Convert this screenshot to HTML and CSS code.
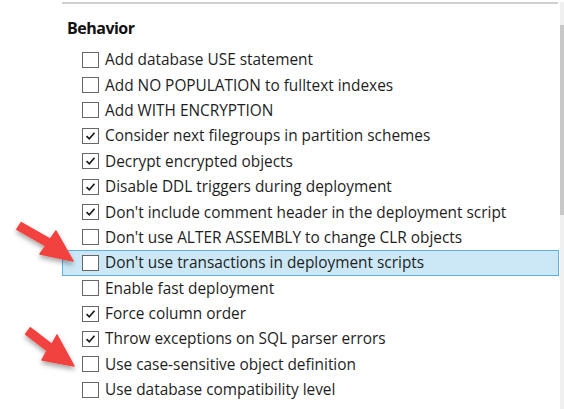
FILE: index.html
```html
<!DOCTYPE html>
<html lang="en">
<head>
  <meta charset="UTF-8" />
  <title>Behavior options</title>
  <link rel="stylesheet" href="styles.css">
</head>
<body>
  <div class="frame">
    <div class="panel">
      <h2 class="group-title">Behavior</h2>
      <ul class="options">
        <li class="option"><span class="box"></span>Add database USE statement</li>
        <li class="option"><span class="box"></span>Add NO POPULATION to fulltext indexes</li>
        <li class="option"><span class="box"></span>Add WITH ENCRYPTION</li>
        <li class="option checked"><span class="box"><svg viewBox="0 0 16 16"><path d="M3.5 8.2 L6.6 11.3 L12.6 4.2"/></svg></span>Consider next filegroups in partition schemes</li>
        <li class="option checked"><span class="box"><svg viewBox="0 0 16 16"><path d="M3.5 8.2 L6.6 11.3 L12.6 4.2"/></svg></span>Decrypt encrypted objects</li>
        <li class="option checked"><span class="box"><svg viewBox="0 0 16 16"><path d="M3.5 8.2 L6.6 11.3 L12.6 4.2"/></svg></span>Disable DDL triggers during deployment</li>
        <li class="option checked"><span class="box"><svg viewBox="0 0 16 16"><path d="M3.5 8.2 L6.6 11.3 L12.6 4.2"/></svg></span>Don't include comment header in the deployment script</li>
        <li class="option"><span class="box"></span>Don't use ALTER ASSEMBLY to change CLR objects</li>
        <li class="option selected"><span class="box"></span>Don't use transactions in deployment scripts</li>
        <li class="option"><span class="box"></span>Enable fast deployment</li>
        <li class="option checked"><span class="box"><svg viewBox="0 0 16 16"><path d="M3.5 8.2 L6.6 11.3 L12.6 4.2"/></svg></span>Force column order</li>
        <li class="option checked"><span class="box"><svg viewBox="0 0 16 16"><path d="M3.5 8.2 L6.6 11.3 L12.6 4.2"/></svg></span>Throw exceptions on SQL parser errors</li>
        <li class="option"><span class="box"></span>Use case-sensitive object definition</li>
        <li class="option"><span class="box"></span>Use database compatibility level</li>
      </ul>
    </div>
    <div class="scrollbar"><div class="thumb"></div></div>
  </div>

  <!-- callout arrows drawn over the screenshot -->
  <svg class="arrows" width="564" height="409" viewBox="0 0 564 409">
    <defs>
      <filter id="shadow" x="-30%" y="-30%" width="160%" height="160%">
        <feDropShadow dx="0" dy="3" stdDeviation="2.5" flood-color="#000" flood-opacity="0.35"/>
      </filter>
    </defs>
    <g fill="#f2423f" stroke="#f2423f" stroke-width="1.5" stroke-linejoin="round" filter="url(#shadow)">
      <path d="M21.2 222.6 L50.2 239.1 L56 231 L73 261 L40 254 L45.8 245.9 L16.8 229.4 Z"/>
      <path d="M30.4 327.8 L51.9 344.3 L57 335 L74 366 L42 360 L47.1 350.7 L25.6 334.2 Z"/>
    </g>
  </svg>
</body>
</html>
```

FILE: styles.css
```css
* {
  box-sizing: border-box;
}

html, body {
  margin: 0;
  padding: 0;
  background: #ffffff;
  font-family: 'Open Sans', 'Noto Sans', sans-serif;
  color: #1e1e1e;
  overflow: hidden;
}

.frame {
  display: flex;
  height: 409px;
  margin-left: 62px;
  padding-top: 2px;
}

.panel {
  flex: 1;
  border-top: 2px solid #d0d0d0;
  padding-top: 14px;
}

.group-title {
  margin: 0 0 9px 5px;
  font-size: 16px;
  font-weight: 700;
  line-height: 20px;
  letter-spacing: -0.5px;
  color: #111;
}

.options {
  list-style: none;
  margin: 0;
  padding: 0;
}

.option {
  display: flex;
  align-items: center;
  height: 25.4px;
  padding-left: 19px;
  font-size: 15.4px;
  white-space: nowrap;
  border: 1px solid transparent;
  margin-right: -1px;
}

.option.selected {
  background: #cce8f7;
  border-color: #5cb0e4;
}

.box {
  width: 17px;
  height: 16px;
  border: 1px solid #666;
  background: #fff;
  margin-right: 6px;
  flex: none;
  display: flex;
}

.box svg {
  width: 15px;
  height: 14px;
}

.box path {
  fill: none;
  stroke: #1a1a1a;
  stroke-width: 1.9;
}

.scrollbar {
  width: 4px;
  margin-left: 2px;
  background: #f0f0f0;
  padding-top: 23px;
}

.thumb {
  height: 190px;
  background: #c8c8c8;
}

.arrows {
  position: absolute;
  left: 0;
  top: 0;
  pointer-events: none;
}
```
